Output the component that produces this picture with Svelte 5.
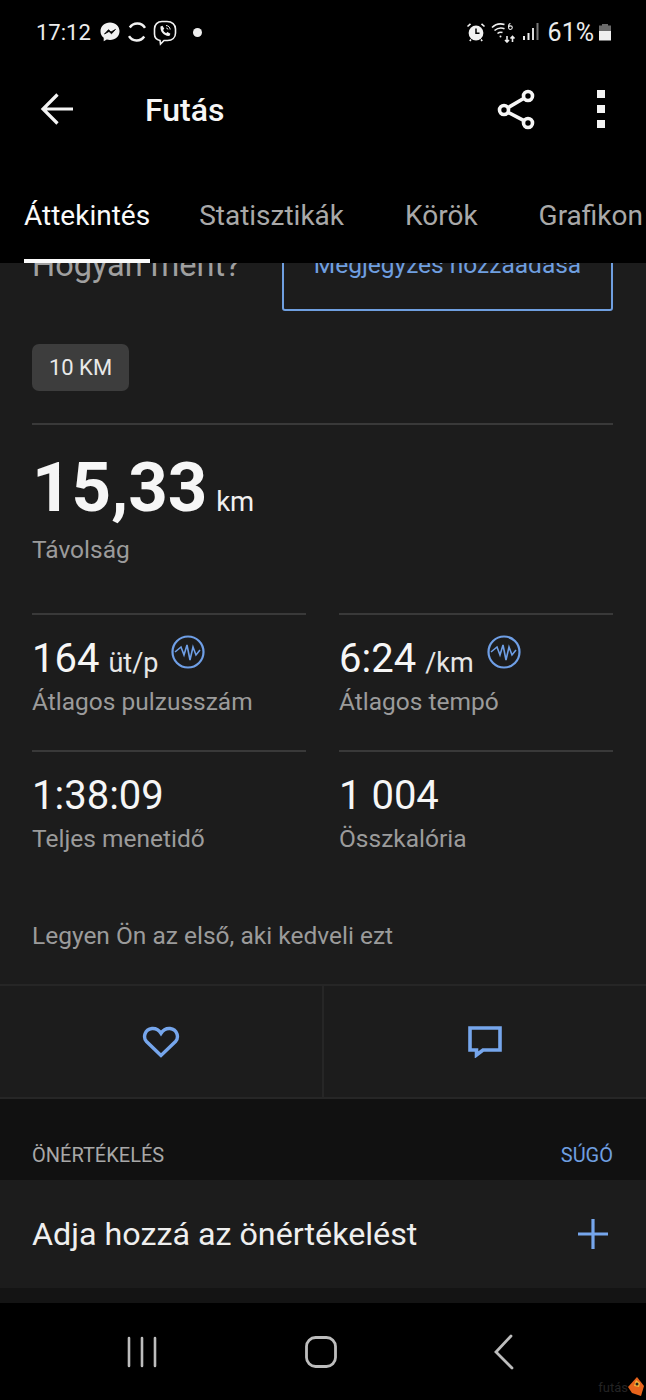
<script>
	const tabs = ['Áttekintés', 'Statisztikák', 'Körök', 'Grafikon'];
	const stats = [
		{ value: '164', unit: 'üt/p', label: 'Átlagos pulzusszám', pulse: true },
		{ value: '6:24', unit: '/km', label: 'Átlagos tempó', pulse: true },
		{ value: '1:38:09', unit: '', label: 'Teljes menetidő', pulse: false },
		{ value: '1 004', unit: '', label: 'Összkalória', pulse: false }
	];
</script>

<div class="phone">
	<header class="top">
		<div class="status">
			<div class="status-side">
				<span class="clock">17:12</span>
				<svg width="22" height="22" viewBox="0 0 22 22">
					<path d="M11 1.500C5.500 1.500 1.500 5.300 1.500 10.200c0 2.700 1.200 5 3.200 6.600v3.400l3.100-1.700c1 .3 2.100.4 3.200.4 5.500 0 9.500-3.800 9.500-8.700S16.500 1.500 11 1.500z" fill="#f2f2f2" />
					<path d="M5.500 13l4-4.300 2.500 2.300 4.500-2.600-4 4.400-2.500-2.400z" fill="#000" stroke="#000" stroke-width=".8" />
				</svg>
				<svg width="22" height="22" viewBox="0 0 22 22" fill="none" stroke="#f2f2f2" stroke-width="2.400">
					<path d="M19 6.800A9 9 0 0 0 3.800 6.500" />
					<path d="M3 15.200a9 9 0 0 0 15.200.300" />
				</svg>
				<svg class="viber" width="24" height="26" viewBox="0 0 24 26" fill="none" stroke="#f2f2f2" stroke-width="1.600">
					<path d="M7 20.500c-3.500-.8-5.500-3-5.500-6.500V9c0-4.500 3-7.500 7.500-7.500h5c5 0 8.500 3 8.500 7.500v4c0 4.500-3.200 7.500-8 7.500h-3.500L7.500 24z" />
					<path d="M7.500 6.500l2-.8 1.800 3-1.200 1.300c.6 1.500 1.600 2.500 3 3.200l1.300-1.200 3 1.800-.8 2c-5 .8-9.800-4-9.100-9.300z" fill="#f2f2f2" stroke="none" />
					<path d="M13 5.500c2.500.2 4 1.700 4.200 4M13.300 8c1 .1 1.500.6 1.600 1.500" stroke-width="1" />
				</svg>
				<span class="dot"></span>
			</div>
			<div class="status-side right">
				<svg width="20" height="20" viewBox="0 0 20 20">
					<circle cx="10" cy="11" r="7.400" fill="#f2f2f2" />
					<path d="M10 6.500V11.300H13.500" fill="none" stroke="#000" stroke-width="1.500" />
					<path d="M1.500 4.500L4.500 1.800M18.500 4.500L15.500 1.800M5 17.500L3.800 19M15 17.500l1.200 1.500" stroke="#f2f2f2" stroke-width="1.600" />
				</svg>
				<svg class="wifi" width="26" height="22" viewBox="0 0 26 22" fill="none" stroke="#eee" stroke-width="1.600">
					<path d="M1 6.500C4 3.500 9 2.200 13.500 3.500M3.500 9.500c3-2.500 7-3 10-1.800M6.500 12.500c1.500-1.200 3.500-1.500 5-1" />
					<circle cx="9.500" cy="15.500" r="1" fill="#eee" stroke="none" />
					<path d="M16 15v6M14 19l2 2 2-2M21.500 21v-5.500M19.500 17.500l2-2 2 2" />
					<path d="M19.500 2.500c-1.800 0-2 2-2 3.500s.6 2.500 1.900 2.500 1.900-1 1.900-1.900-.7-1.700-1.800-1.700-1.800.6-2 1" stroke-width="1.100" />
				</svg>
				<svg class="signal" width="16" height="18" viewBox="0 0 16 18">
					<rect x="0" y="13" width="2" height="4" fill="#eee" />
					<rect x="4.500" y="10" width="2" height="7" fill="#eee" />
					<rect x="9" y="5" width="2" height="12" fill="#ddd" />
					<rect x="13.500" y="0" width="2" height="17" fill="#777" />
				</svg>
				<span class="battery-pct">61%</span>
				<span class="battery"></span>
			</div>
		</div>

		<div class="titlebar">
			<svg class="back" width="36" height="34" viewBox="0 0 36 34" fill="none" stroke="#f4f4f4" stroke-width="3.200">
				<path d="M34 17H4M18.500 2.500L4 17l14.500 14.500" />
			</svg>
			<h1>Futás</h1>
			<svg class="share" width="40" height="42" viewBox="0 0 40 42" fill="none" stroke="#f6f6f6" stroke-width="3.600">
				<circle cx="31" cy="8" r="4.500" />
				<circle cx="7" cy="22" r="4.500" />
				<circle cx="31" cy="35" r="4.500" />
				<path d="M11 19.700l16-9.400M11 24.300l16 8.400" />
			</svg>
			<div class="more"><i></i><i></i><i></i></div>
		</div>

		<nav class="tabs">
			{#each tabs as tab, i}
				<span class="tab" class:active={i === 0}>{tab}</span>
			{/each}
		</nav>
	</header>

	<main class="scroll">
		<div class="how">
			<span class="how-q">Hogyan ment?</span>
			<div class="note">Megjegyzés hozzáadása</div>
		</div>

		<div class="overview">
			<span class="chip">10 KM</span>
			<div class="distance">
				<div class="big"><b>15,33</b> <span>km</span></div>
				<div class="lbl">Távolság</div>
			</div>

			<div class="grid">
				{#each stats as s}
					<div class="stat">
						<div class="val">
							{s.value}
							{#if s.unit}<span class="unit">{s.unit}</span>{/if}
							{#if s.pulse}
								<svg class="pulse" width="34" height="34" viewBox="0 0 34 34" fill="none" stroke="#6f9fe6">
									<circle cx="17" cy="17" r="15.500" stroke-width="2.200" />
									<path d="M4 17l6-5 3 8 3-10 3 15 3-13 3 8 4-5" stroke-width="1.600" />
								</svg>
							{/if}
						</div>
						<div class="lbl">{s.label}</div>
					</div>
				{/each}
			</div>

			<p class="likes">Legyen Ön az első, aki kedveli ezt</p>
		</div>

		<div class="actions">
			<div class="action">
				<svg width="38" height="32" viewBox="0 0 38 32" fill="none" stroke="#76a6ec" stroke-width="3.400">
					<path d="M19 29.500L4.500 15.500C.8 11.500 2.500 3.500 10 2.500c4-.3 7 1.500 9 4.800 2-3.300 5-5.100 9-4.800 7.500 1 9.200 9 5.500 13z" />
				</svg>
			</div>
			<div class="action">
				<svg width="34" height="32" viewBox="0 0 34 32" fill="none" stroke="#76a6ec" stroke-width="3.600">
					<path d="M2 2h30v22H15l-6.500 5v-5H2z" />
				</svg>
			</div>
		</div>

		<div class="section-head">
			<span>ÖNÉRTÉKELÉS</span>
			<span class="help">SÚGÓ</span>
		</div>

		<div class="rate">
			<span>Adja hozzá az önértékelést</span>
			<svg width="32" height="32" viewBox="0 0 32 32" stroke="#76a6ec" stroke-width="3.200">
				<path d="M16 1v30M1 16h30" />
			</svg>
		</div>
		<div class="rate-foot"></div>
	</main>

	<footer class="navbar">
		<svg width="34" height="34" viewBox="0 0 34 34" stroke="#bdbdbd" stroke-width="2.600" stroke-linecap="round">
			<path d="M4 3v28M17 3v28M30 3v28" />
		</svg>
		<svg class="home" width="34" height="34" viewBox="0 0 34 34" fill="none" stroke="#bdbdbd" stroke-width="2.800">
			<rect x="2.500" y="2.500" width="29" height="29" rx="9" />
		</svg>
		<svg class="chevron" width="24" height="36" viewBox="0 0 24 36" fill="none" stroke="#bdbdbd" stroke-width="2.800" stroke-linecap="round">
			<path d="M18 2L3 18l16 16" />
		</svg>
		<div class="mark">
			<span>futás</span>
			<svg width="16" height="20" viewBox="0 0 16 20">
				<path d="M9 0l7 9-3 10-9-3-4-6z" fill="#e8641c" />
				<path d="M8 3l4 3-1 4-5-1z" fill="#f5b53a" />
				<circle cx="9" cy="7" r="1.500" fill="#222" />
			</svg>
		</div>
	</footer>
</div>

<style>
	:global(body) {
		margin: 0;
		background: #000;
	}

	.phone {
		width: 646px;
		height: 1400px;
		display: flex;
		flex-direction: column;
		overflow: hidden;
		background: #000;
		font-family: Roboto, 'Liberation Sans', sans-serif;
		color: #f4f4f4;
	}

	.top {
		height: 263px;
		flex: none;
		background: #000;
	}

	.status {
		height: 64px;
		display: flex;
		justify-content: space-between;
		align-items: center;
		padding: 0 35px 0 36px;
	}

	.status-side {
		display: flex;
		align-items: center;
		gap: 5px;
	}

	.status-side.right {
		gap: 0;
	}

	.clock {
		font-size: 22px;
		color: #ececec;
		margin-right: 3px;
	}

	.viber {
		margin-top: 2px;
	}

	.dot {
		width: 9px;
		height: 9px;
		border-radius: 50%;
		background: #eee;
		margin-left: 11px;
	}

	.wifi {
		margin-left: 5px;
	}

	.signal {
		margin-left: 6px;
	}

	.battery-pct {
		font-size: 25px;
		color: #ececec;
		margin-left: 9px;
	}

	.battery {
		width: 12px;
		height: 17px;
		margin-left: 5px;
		background: linear-gradient(#6a6a6a 0 40%, #efefef 40%);
		clip-path: polygon(25% 0, 75% 0, 75% 12%, 100% 12%, 100% 100%, 0 100%, 0 12%, 25% 12%);
	}

	.titlebar {
		height: 90px;
		display: flex;
		align-items: center;
		padding-left: 39px;
	}

	.titlebar h1 {
		font-size: 32px;
		font-weight: 500;
		margin: 2px 0 0 70px;
		color: #f6f6f6;
		flex: 1;
	}

	.share {
		margin-right: 60px;
	}

	.more {
		display: flex;
		flex-direction: column;
		gap: 7px;
		margin-right: 41px;
	}

	.more i {
		width: 8px;
		height: 8px;
		background: #f4f4f4;
	}

	.tabs {
		height: 109px;
		display: flex;
		padding-left: 24px;
		overflow: hidden;
		white-space: nowrap;
		font-size: 28px;
		line-height: 33px;
		color: #a9a9a9;
	}

	.tab {
		flex: none;
		padding-top: 45px;
		margin-left: 61px;
	}

	.tab:nth-child(2) {
		margin-left: 49px;
	}

	.tab.active {
		margin-left: 0;
		color: #fafafa;
		box-sizing: border-box;
		border-bottom: 4px solid #fafafa;
	}

	.scroll {
		flex: 1;
		min-height: 0;
		overflow: hidden;
		background: #111;
		display: flex;
		flex-direction: column;
	}

	.how {
		flex: none;
		height: 48px;
		box-sizing: border-box;
		display: flex;
		justify-content: space-between;
		padding: 0 33px 0 32px;
		background: #1c1c1c;
		overflow: hidden;
	}

	.how-q {
		margin-top: -16px;
		font-size: 32.500px;
		line-height: 36px;
		color: #a0a0a0;
	}

	.note {
		width: 327px;
		height: 58px;
		margin-top: -14px;
		flex: none;
		border: 2px solid #6f9fe0;
		border-radius: 3px;
		color: #6f9fe0;
		text-align: center;
		font-size: 24.500px;
		line-height: 28px;
		display: flex;
		justify-content: center;
		align-items: flex-start;
	}

	.overview {
		background: #1c1c1c;
		padding: 33px 33px 0 32px;
		flex: none;
		height: 674px;
		box-sizing: border-box;
	}

	.chip {
		display: inline-block;
		width: 97px;
		height: 47px;
		line-height: 48px;
		text-align: center;
		border-radius: 7px;
		background: #3d3d3d;
		font-size: 22px;
		color: #e9e9e9;
		vertical-align: top;
	}

	.distance {
		margin-top: 32px;
		border-top: 2px solid #393939;
		padding-top: 20px;
	}

	.big {
		line-height: 86px;
		height: 86px;
		font-size: 27.500px;
		color: #f0f0f0;
	}

	.big b {
		font-size: 69px;
		font-weight: 700;
		color: #f6f6f6;
		margin-right: 2px;
	}

	.lbl {
		font-size: 24.500px;
		line-height: 28px;
		color: #9b9b9b;
	}

	.distance .lbl {
		margin-top: 5px;
	}

	.grid {
		display: grid;
		grid-template-columns: 274px 274px;
		column-gap: 33px;
		margin-top: 49px;
	}

	.stat {
		height: 137px;
		box-sizing: border-box;
		border-top: 2px solid #393939;
		padding-top: 19px;
	}

	.val {
		font-size: 40px;
		line-height: 50px;
		color: #f6f6f6;
		height: 54px;
		white-space: nowrap;
		display: flex;
		align-items: baseline;
		gap: 9px;
	}

	.unit {
		font-size: 27px;
		color: #e6e6e6;
	}

	.pulse {
		align-self: flex-start;
		margin: 1px 0 0 4px;
	}

	.likes {
		margin: 35px 0 0;
		font-size: 24.500px;
		line-height: 28px;
		color: #9b9b9b;
	}

	.actions {
		flex: none;
		height: 115px;
		box-sizing: border-box;
		display: flex;
		background: #1c1c1c;
		border-top: 2px solid #262626;
		border-bottom: 2px solid #262626;
		margin-top: -1px;
	}

	.action {
		flex: 1;
		display: flex;
		align-items: center;
		justify-content: center;
	}

	.action:first-child {
		border-right: 2px solid #262626;
	}

	.section-head {
		flex: none;
		height: 81px;
		box-sizing: border-box;
		display: flex;
		justify-content: space-between;
		padding: 43px 33px 0 32px;
		font-size: 20px;
		line-height: 26px;
		color: #a8a8a8;
		background: #111;
	}

	.help {
		color: #6f9fe0;
	}

	.rate {
		flex: none;
		height: 108px;
		box-sizing: border-box;
		padding: 0 37px 0 32px;
		background: #1c1c1c;
		display: flex;
		align-items: center;
		justify-content: space-between;
		font-size: 32.250px;
		color: #efefef;
	}

	.rate-foot {
		flex: 1;
		background: #141414;
	}

	.navbar {
		height: 97px;
		flex: none;
		background: #000;
		position: relative;
		display: flex;
		align-items: center;
		padding: 0 0 0 125px;
		gap: 146px;
	}

	.home {
		margin-left: -1px;
	}

	.chevron {
		margin-left: 9px;
	}

	.mark {
		position: absolute;
		right: 2px;
		bottom: 3px;
		display: flex;
		align-items: center;
		font-size: 13px;
		color: #242424;
	}
</style>
